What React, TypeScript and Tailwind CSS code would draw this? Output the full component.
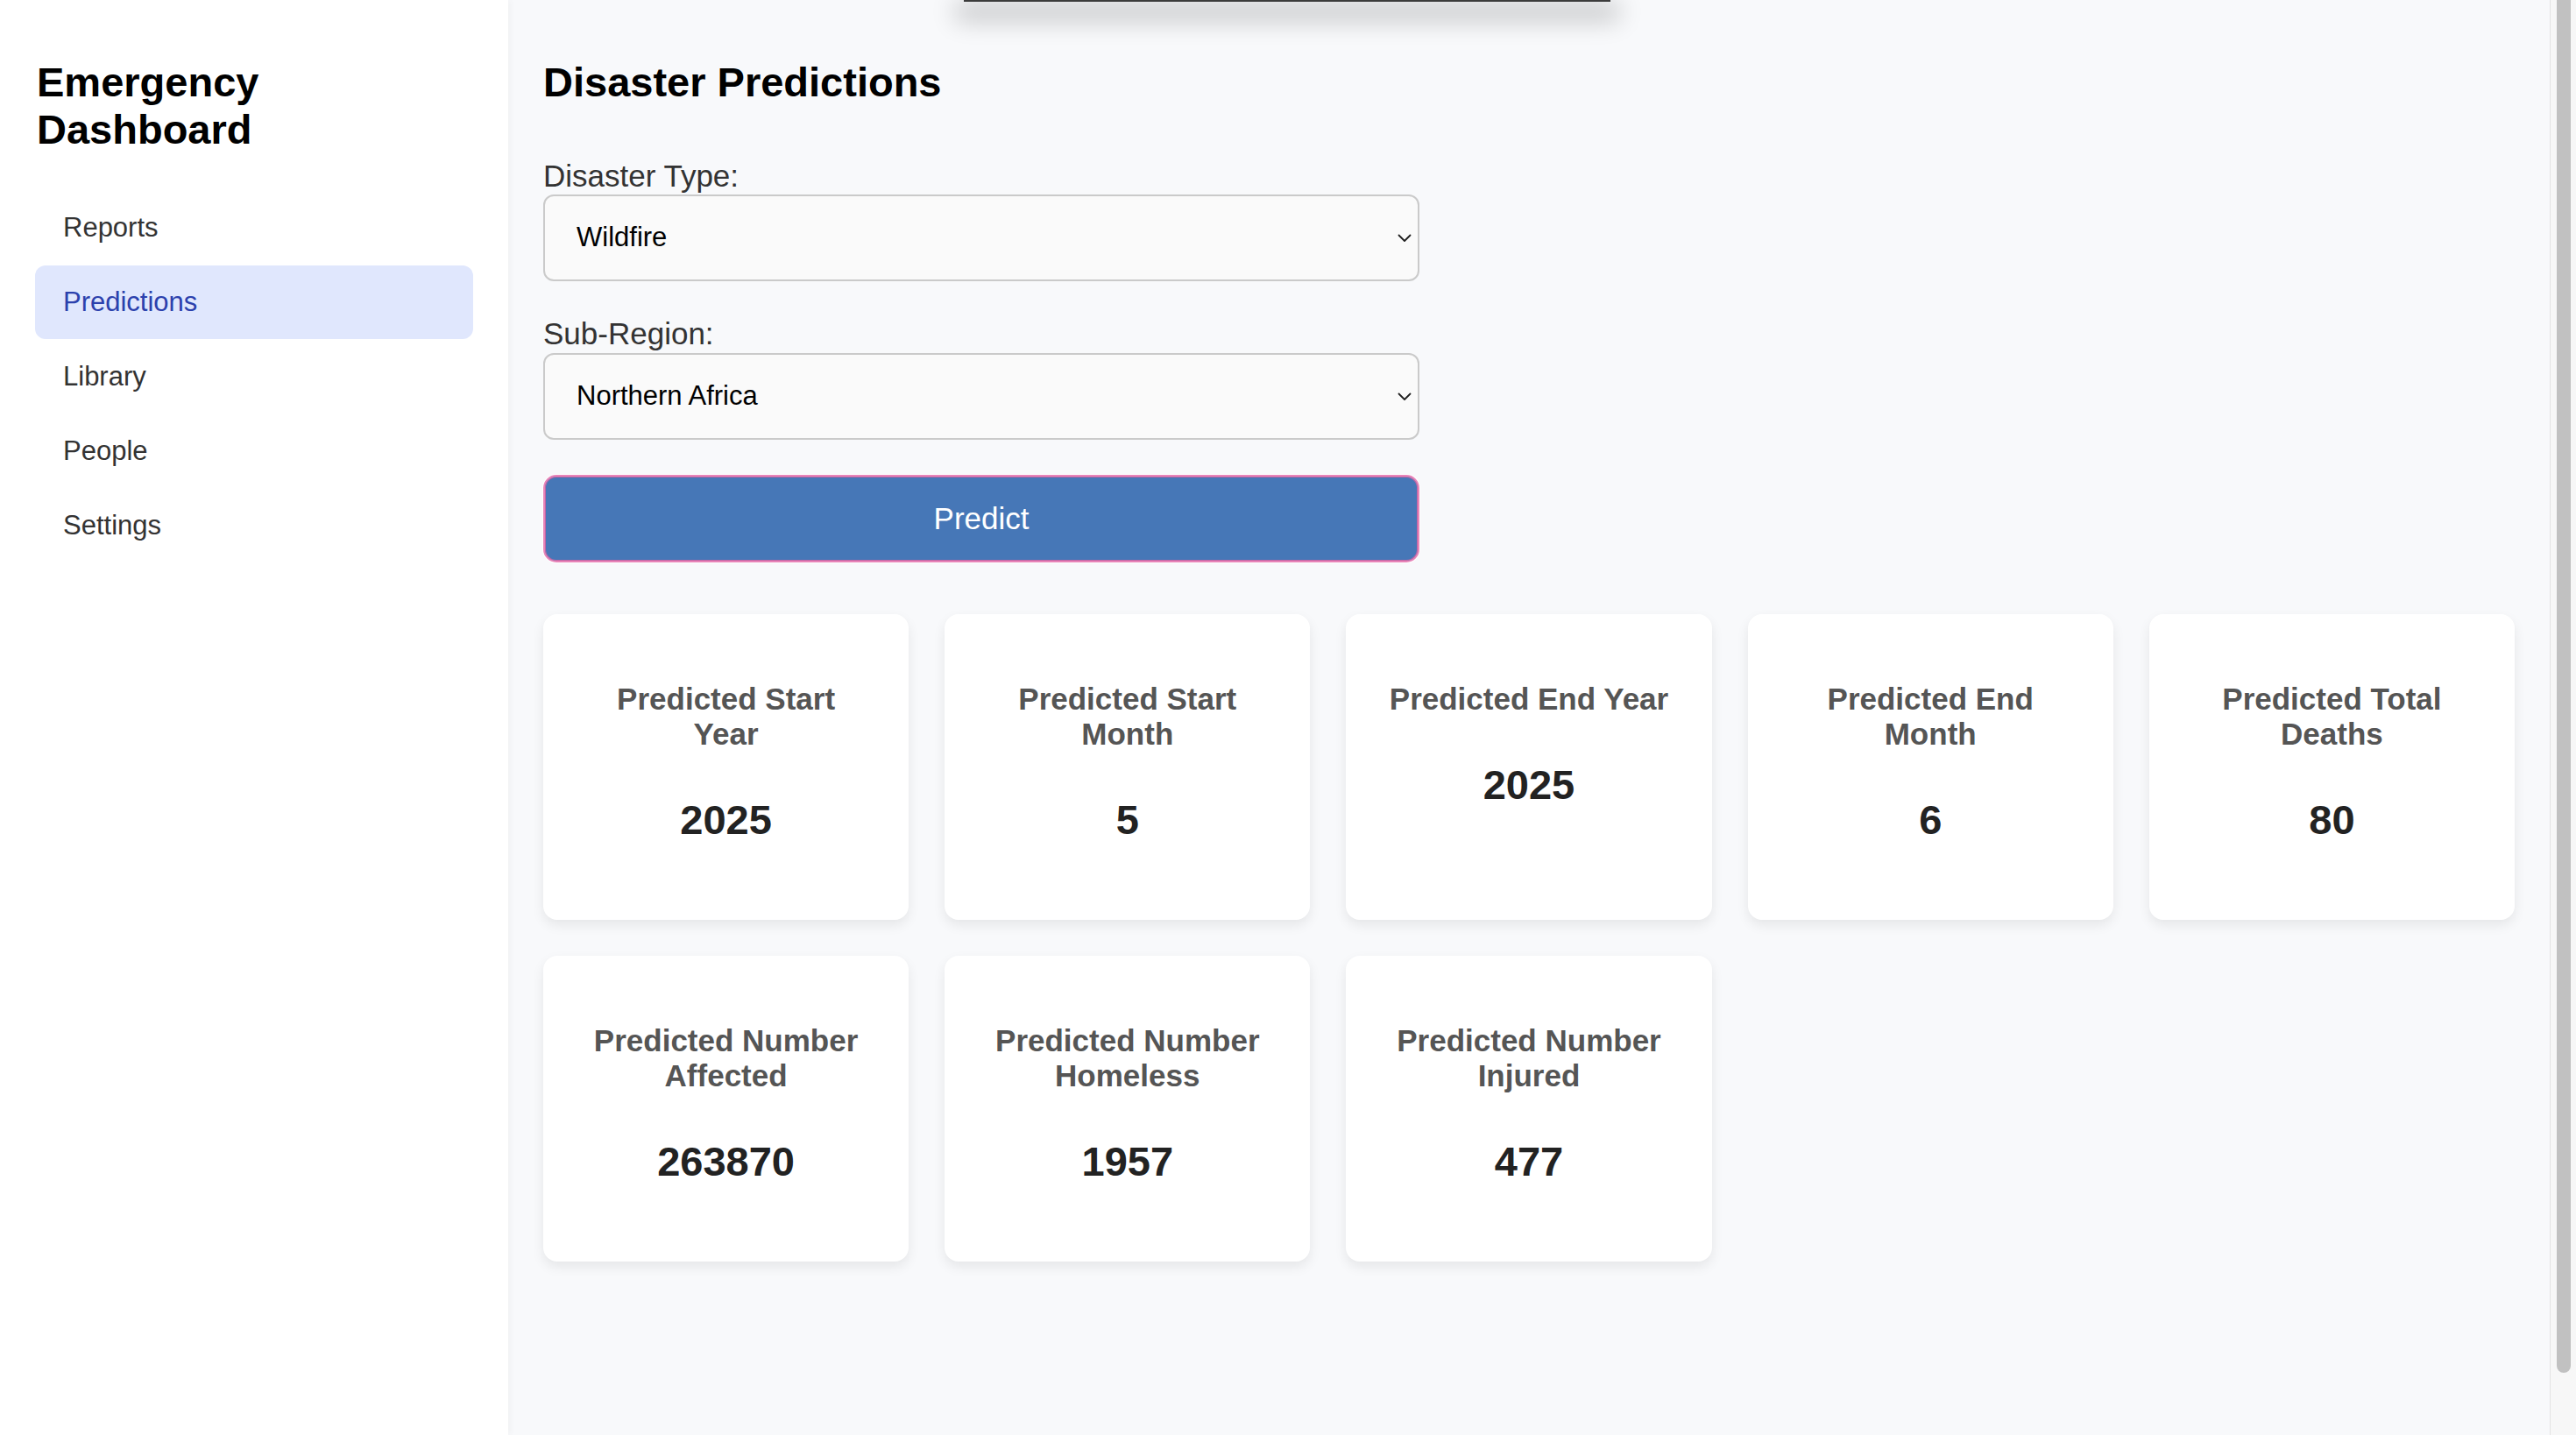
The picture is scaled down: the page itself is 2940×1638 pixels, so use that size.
const navItems = ['Reports', 'Predictions', 'Library', 'People', 'Settings'];

const predictions = [
  { label: 'Predicted Start Year', value: '2025' },
  { label: 'Predicted Start Month', value: '5' },
  { label: 'Predicted End Year', value: '2025' },
  { label: 'Predicted End Month', value: '6' },
  { label: 'Predicted Total Deaths', value: '80' },
  { label: 'Predicted Number Affected', value: '263870' },
  { label: 'Predicted Number Homeless', value: '1957' },
  { label: 'Predicted Number Injured', value: '477' },
];

const Chevron = () => (
  <svg width="16" height="10" viewBox="0 0 16 10" fill="none">
    <path d="M1.5 1.5 L8 8 L14.5 1.5" stroke="#1f1f1f" strokeWidth="1.8" strokeLinecap="round" strokeLinejoin="round" />
  </svg>
);

const SelectBox = ({ value }: { value: string }) => (
  <div className="flex h-[99px] w-full items-center justify-between rounded-[12px] border-2 border-[#cacaca] bg-[#fafafa] pl-[36px] pr-[7px] text-[31px] text-black">
    <span>{value}</span>
    <Chevron />
  </div>
);

const PredictionCard = ({ label, value }: { label: string; value: string }) => (
  <div className="rounded-[16px] bg-white px-[44px] pt-[77px] pb-[87px] text-center shadow-[0_6px_14px_rgba(0,0,0,0.08)]">
    <h3 className="text-[35px] font-bold leading-[40px] text-[#555]">{label}</h3>
    <p className="mt-[51px] text-[47px] font-bold leading-[54px] text-[#222]">{value}</p>
  </div>
);

export default function App() {
  return (
    <div className="flex h-[1638px] w-full overflow-hidden bg-[#f8f9fb] font-['Liberation_Sans',Arial,sans-serif]">
      {/* Sidebar */}
      <aside className="relative z-10 w-[580px] shrink-0 bg-white px-[40px] pt-[67px] shadow-[2px_0_8px_rgba(0,0,0,0.04)]">
        <h1 className="pl-[2px] text-[47px] font-bold leading-[54px] text-black">
          Emergency
          <br />
          Dashboard
        </h1>
        <nav className="mt-[43px] flex flex-col gap-[1px]">
          {navItems.map((item) => {
            const active = item === 'Predictions';
            return (
              <div
                key={item}
                className={`flex h-[84px] items-center rounded-[12px] px-[32px] text-[31px] ${
                  active ? 'bg-[#e0e7fd] text-[#2c41ad]' : 'text-[#333]'
                }`}
              >
                {item}
              </div>
            );
          })}
        </nav>
      </aside>

      {/* Main */}
      <main className="relative flex-1 px-[40px] pt-[67px]">
        {/* edge of a popup above the viewport */}
        <div className="absolute top-0 left-[520px] h-[2px] w-[738px] bg-[#3c3c3c] shadow-[0_12px_28px_10px_rgba(0,0,0,0.2)]" />

        <h2 className="text-[47px] font-bold leading-[54px] text-black">Disaster Predictions</h2>

        <div className="mt-[60px] w-[1000px]">
          <label className="block text-[35px] leading-[40px] text-[#333]">Disaster Type:</label>
          <div className="mt-[1px]">
            <SelectBox value="Wildfire" />
          </div>

          <label className="mt-[40px] block text-[35px] leading-[40px] text-[#333]">Sub-Region:</label>
          <div className="mt-[2px]">
            <SelectBox value="Northern Africa" />
          </div>

          <button className="mt-[40px] flex h-[100px] w-full items-center justify-center rounded-[15px] border-2 border-[#e884b8] bg-[#4677b7] text-[35px] text-white shadow-[inset_0_0_0_1px_#bf64a3] ring-1 ring-white">
            Predict
          </button>
        </div>

        <div className="mt-[59px] grid grid-cols-5 gap-[41px]">
          {predictions.map((p) => (
            <PredictionCard key={p.label} label={p.label} value={p.value} />
          ))}
        </div>
      </main>

      {/* Scrollbar */}
      <div className="w-[30px] shrink-0 border-l border-[#e3e3e3] bg-[#f7f7f7] pl-[7px]">
        <div className="h-[1567px] w-[16px] rounded-b-full bg-[#c1c1c1]" />
      </div>
    </div>
  );
}
